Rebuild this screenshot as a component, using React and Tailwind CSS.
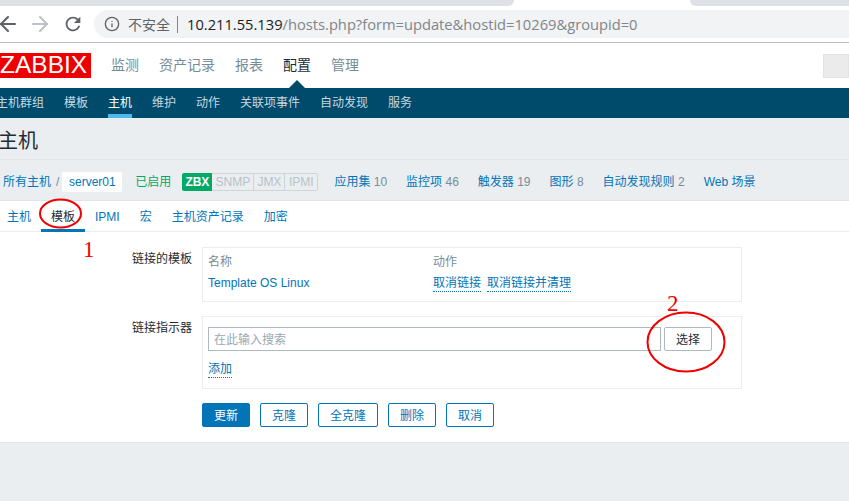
import React from 'react'
import { ArrowLeft, ArrowRight, Info } from 'lucide-react'

const mainNav = ['监测', '资产记录', '报表', '配置', '管理']
const subNav = ['主机群组', '模板', '主机', '维护', '动作', '关联项事件', '自动发现', '服务']
const tabs = ['主机', '模板', 'IPMI', '宏', '主机资产记录', '加密']
const counts = [
  ['应用集', '10'],
  ['监控项', '46'],
  ['触发器', '19'],
  ['图形', '8'],
  ['自动发现规则', '2'],
  ['Web 场景', ''],
]

const Button = ({ children, primary, className = '' }) => (
  <button
    className={`h-6 rounded-[2px] border border-[#0275b8] pt-[2px] text-xs ${primary ? 'bg-[#0275b8] text-white' : 'bg-white text-[#0275b8]'} ${className}`}
  >
    {children}
  </button>
)

const Browser = () => (
  <div className="h-[43px] shrink-0 border-b border-[#bbbcbe] bg-white">
    <div className="flex h-1.5">
      <div className="w-[514px] rounded-br-lg bg-[#dee1e6]" />
      <div className="ml-[176px] flex-1 rounded-bl-lg bg-[#dee1e6]" />
    </div>
    <div className="flex h-9 items-center text-[#5f6368]">
      <ArrowLeft size={24} strokeWidth={2.1} className="-ml-1 shrink-0" />
      <ArrowRight size={24} strokeWidth={2.1} className="ml-2 shrink-0 text-[#bdc1c6]" />
      <svg viewBox="0 0 24 24" width="22" height="22" fill="currentColor" className="ml-[10px] shrink-0">
        <path d="M17.65 6.35C16.2 4.9 14.21 4 12 4c-4.42 0-7.99 3.58-7.99 8s3.57 8 7.99 8c3.73 0 6.84-2.55 7.73-6h-2.08c-.82 2.33-3.04 4-5.65 4-3.31 0-6-2.69-6-6s2.69-6 6-6c1.66 0 3.14.69 4.22 1.78L13 11h7V4l-2.35 2.35z" />
      </svg>
      <div className="ml-[10px] flex h-7 flex-1 items-center rounded-l-full bg-[#f1f3f4] pl-[10px] font-['Open_Sans','Noto_Sans_CJK_SC',sans-serif] text-[14.7px]">
        <Info size={16} strokeWidth={2} className="shrink-0" />
        <span className="ml-[8px] text-[14px] text-[#5f6368]">不安全</span>
        <span className="ml-[7px] h-[17px] w-px bg-[#80868b]" />
        <span className="ml-[9px] text-[#202124]">10.211.55.139</span>
        <span className="text-[#80868b]">/hosts.php?form=update&amp;hostid=10269&amp;groupid=0</span>
      </div>
    </div>
  </div>
)

const Header = () => (
  <div className="flex h-[45px] shrink-0 items-center bg-white">
    <div className="flex h-[25px] w-[91px] items-center overflow-hidden bg-[#ee0000] font-['Liberation_Sans',sans-serif] text-[24.5px] leading-none text-white">
      ZABBIX
    </div>
    <div className="ml-5 flex gap-5 text-[14px] text-[#768d99]">
      {mainNav.map((item) => (
        <span key={item} className={item === '配置' ? 'text-[#1f2c33]' : ''}>{item}</span>
      ))}
    </div>
    <div className="ml-auto h-6 w-[26px] border border-[#e3e3e3] bg-[#ebebeb]" />
  </div>
)

const SubNav = () => (
  <div className="relative flex h-[30px] shrink-0 items-stretch bg-[#004b6b] text-xs text-[#c5d8e1]">
    <div className="absolute -top-[8px] left-[289px] h-0 w-0 border-x-8 border-b-8 border-x-transparent border-b-[#004b6b]" />
    <div className="-ml-[4px] flex gap-5">
      {subNav.map((item) => (
        <span
          key={item}
          className={`flex items-center border-b-4 pt-1 ${item === '主机' ? 'border-[#4fb9ea] text-white' : 'border-transparent'}`}
        >
          {item}
        </span>
      ))}
    </div>
  </div>
)

const HostBar = () => (
  <div className="flex h-[42px] shrink-0 items-center border-y border-[#dfe4e7] pl-[3px] pt-[4px] text-xs">
    <span className="text-[#0275b8]">所有主机</span>
    <span className="ml-[5px] text-[#768d99]">/</span>
    <span className="ml-[3px] flex h-5 w-[60px] items-center justify-center rounded-[2px] bg-white text-[#0275b8]">server01</span>
    <span className="ml-[13px] text-[#00aa66]">已启用</span>
    <div className="ml-[11px] flex h-[18px] items-stretch font-['Liberation_Sans',sans-serif] text-[12px]">
      <span className="flex w-[30px] items-center justify-center rounded-l-[2px] bg-[#00aa66] font-bold text-white">ZBX</span>
      <span className="flex w-[42px] items-center justify-center border-y border-r border-[#cdd5d9] bg-[#ebeef0] text-[#b5c3ca]">SNMP</span>
      <span className="flex w-[31px] items-center justify-center border-y border-r border-[#cdd5d9] bg-[#ebeef0] text-[#b5c3ca]">JMX</span>
      <span className="flex w-[33px] items-center justify-center rounded-r-[2px] border-y border-r border-[#cdd5d9] bg-[#ebeef0] text-[#b5c3ca]">IPMI</span>
    </div>
    <div className="ml-[16px] flex gap-[19px]">
      {counts.map(([name, n]) => (
        <span key={name} className="text-[#0275b8]">
          {name} <span className="text-[#768d99]">{n}</span>
        </span>
      ))}
    </div>
  </div>
)

const Tabs = () => (
  <div className="flex h-[31px] shrink-0 gap-5 border-b border-[#ebeef0] pl-[7px] pt-[1px] text-xs text-[#0275b8]">
    {tabs.map((tab) => (
      <span
        key={tab}
        className={`flex items-center ${tab === '模板' ? 'relative text-[#1f2c33]' : ''}`}
      >
        {tab}
        {tab === '模板' && <span className="absolute -inset-x-[10px] -bottom-[1px] h-[3px] bg-[#0275b8]" />}
      </span>
    ))}
  </div>
)

const Row = ({ label, children, className }) => (
  <div className="flex">
    <div className="w-[192px] pt-[4px] text-right text-xs text-[#1f2c33]">{label}</div>
    <div className={`ml-2.5 w-[540px] border border-[#ebeef0] px-[5px] ${className}`}>{children}</div>
  </div>
)

const Form = () => (
  <div className="flex flex-col pt-[15px] text-xs">
    <Row label="链接的模板" className="h-[55px] pt-[6px]">
      <div className="flex text-[#768d99]">
        <span className="w-[225px]">名称</span>
        <span>动作</span>
      </div>
      <div className="mt-[5px] flex text-[#0275b8]">
        <span className="w-[225px]">Template OS Linux</span>
        <span className="border-b border-dotted border-[#0275b8]">取消链接</span>
        <span className="ml-[6px] border-b border-dotted border-[#0275b8]">取消链接并清理</span>
      </div>
    </Row>
    <div className="mt-[14px]">
      <Row label="链接指示器" className="h-[73px] pt-[10px]">
        <div className="flex gap-[3px]">
          <div className="flex h-6 w-[453px] items-center border border-[#acbbc2] px-[5px] pt-[1px] text-[#9aa8b0]">在此输入搜索</div>
          <button className="h-6 w-12 rounded-[2px] border border-[#acbbc2] bg-white pt-[1px] text-[#1f2c33]">选择</button>
        </div>
        <span className="mt-[10px] inline-block border-b border-dotted border-[#0275b8] text-[#0275b8]">添加</span>
      </Row>
    </div>
    <div className="ml-[202px] mt-[14px] flex gap-2.5">
      <Button primary className="w-12">更新</Button>
      <Button className="w-12">克隆</Button>
      <Button className="w-[60px]">全克隆</Button>
      <Button className="w-12">删除</Button>
      <Button className="w-12">取消</Button>
    </div>
  </div>
)

export default function App() {
  return (
    <div className="relative flex h-[501px] w-[849px] flex-col overflow-hidden bg-[#ebeef0] font-['Liberation_Sans','Noto_Sans_CJK_SC',sans-serif]">
      <Browser />
      <Header />
      <SubNav />
      <div className="flex h-[41px] shrink-0 items-center pt-[4px] text-[20px] text-[#1f2c33]">
        <span className="-ml-[2px]">主机</span>
      </div>
      <HostBar />
      <div className="h-[242px] shrink-0 border-b border-[#dfe4e7] bg-white">
        <Tabs />
        <Form />
      </div>

      {/* red marks drawn over the screenshot */}
      <svg className="pointer-events-none absolute left-0 top-0" width="849" height="501" fill="none" stroke="#f00000" strokeWidth="2">
        <ellipse cx="60.5" cy="213.5" rx="20.5" ry="14" />
        <ellipse cx="686" cy="342" rx="38.5" ry="29.5" />
      </svg>
      <span className="absolute left-[83px] top-[238px] font-['Liberation_Serif',serif] text-[23px] leading-6 text-[#f00000]">1</span>
      <span className="absolute left-[667px] top-[292px] font-['Liberation_Serif',serif] text-[23px] leading-6 text-[#f00000]">2</span>
    </div>
  )
}
